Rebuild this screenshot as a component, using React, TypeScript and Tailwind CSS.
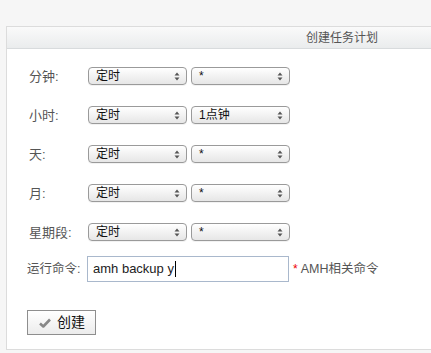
import React from 'react';

const CJK = "font-['Liberation_Sans','Noto_Sans_CJK_SC',sans-serif]";

const ROWS = [
  { label: '分钟:', second: '*' },
  { label: '小时:', second: '1点钟' },
  { label: '天:', second: '*' },
  { label: '月:', second: '*' },
  { label: '星期段:', second: '*' },
];

function Arrows() {
  return (
    <svg width="6" height="9" viewBox="0 0 6 9" className="shrink-0">
      <path d="M3 0.5 L5.5 3.5 L0.5 3.5 Z" fill="#555" />
      <path d="M3 8.5 L5.5 5.5 L0.5 5.5 Z" fill="#555" />
    </svg>
  );
}

function FakeSelect({ value, width }: { value: string; width: string }) {
  return (
    <div
      className={`${width} h-[18px] flex items-center justify-between pl-[7px] pr-[6px] rounded-[4px] border border-[#9a9a9a] bg-gradient-to-b from-white to-[#e6e6e6] text-[12px] leading-none text-[#111] shadow-[0_1px_0_rgba(0,0,0,0.05)]`}
    >
      <span>{value}</span>
      <Arrows />
    </div>
  );
}

export default function App() {
  return (
    <div className={`w-[431px] h-[353px] overflow-hidden bg-[#f6f6f6] pl-[6px] pt-[26px] ${CJK}`}>
      <div className="w-[600px] border border-[#dcdcdc] bg-white">
        {/* Header */}
        <div className="h-[22px] flex items-center pl-[299px] bg-gradient-to-b from-[#fafafa] to-[#eaeced] border-b border-[#d8dbdd] text-[12px] text-[#555]">
          创建任务计划
        </div>

        {/* Form */}
        <div className="pt-[18px] pb-[14px] pl-[20px]">
          <div className="flex flex-col gap-[21px]">
            {ROWS.map((row) => (
              <div key={row.label} className="flex items-center h-[18px]">
                <div className="w-[61px] pl-[2px] pt-[2px] text-[13px] text-[#555]">{row.label}</div>
                <div className="flex gap-[4px]">
                  <FakeSelect value="定时" width="w-[99px]" />
                  <FakeSelect value={row.second} width="w-[99px]" />
                </div>
              </div>
            ))}
          </div>

          <div className="flex items-center mt-[15px] h-[26px]">
            <div className="w-[60px] text-[12.5px] text-[#555]">运行命令:</div>
            <div className="w-[202px] h-[26px] border border-[#a9b8cc] bg-white flex items-center pl-[5px] text-[13px] text-[#222]">
              amh backup y<span className="inline-block w-[1px] h-[16px] bg-black ml-[1px]" />
            </div>
            <span className="ml-[4px] text-[12px] text-[#e00] leading-none self-start mt-[7px]">*</span>
            <span className="ml-[3px] text-[12.5px] text-[#555]">AMH相关命令</span>
          </div>

          <div className="mt-[28px]">
            <button className="w-[69px] h-[25px] border border-[#8e8e8e] bg-gradient-to-b from-white to-[#ececec] flex items-center pl-[11px] gap-[6px] text-[14px] text-[#111]">
              <svg width="12" height="10" viewBox="0 0 12 10">
                <path d="M1 5.5 L4.3 8.5 L11 1.5" fill="none" stroke="#888" strokeWidth="2.6" strokeLinejoin="round" />
              </svg>
              创建
            </button>
          </div>
        </div>
      </div>
    </div>
  );
}
